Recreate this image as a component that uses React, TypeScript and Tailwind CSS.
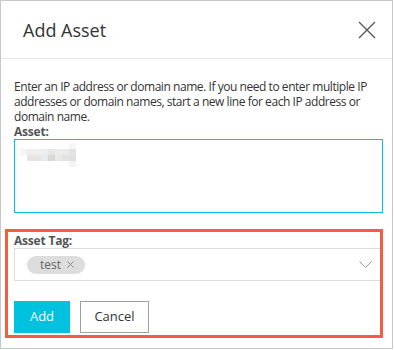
import React from "react";

const mosaic: string[][] = [
  ["#ffffff", "#ffffff", "#ffffff", "#ffffff", "#ffffff", "#ffffff", "#ffffff", "#f7f7f7"],
  ["#f4f4f4", "#ededed", "#efefef", "#ebeef0", "#e6e6e6", "#ececec", "#ebebeb", "#e3e3e3"],
  ["#ffffff", "#e4e4e4", "#e8e6e2", "#e6ebed", "#d8d8d8", "#e9e9e6", "#e2e2e2", "#e1e1e1"],
  ["#ffffff", "#ffffff", "#ffffff", "#ffffff", "#ffffff", "#ffffff", "#ffffff", "#f4f4f4"],
];

export default function App() {
  return (
    <div
      className="relative w-[393px] h-[349px] border border-[#c8c8c8] bg-white text-[#333]"
      style={{ fontFamily: '"Open Sans", "Noto Sans", sans-serif' }}
    >
      <div className="h-[58px] border-b border-[#e5e5e5] flex items-center justify-between pl-[22px] pr-[16px]">
        <span className="text-[18px] leading-none text-[#333]">Add Asset</span>
        <svg width="18" height="18" viewBox="0 0 18 18" fill="none">
          <path d="M1 1L17 17M17 1L1 17" stroke="#555" strokeWidth="1.3" />
        </svg>
      </div>
      <div className="pl-[13px] pr-[9px] pt-[20px]">
        <p className="text-[12px] leading-[15px] text-[#333] tracking-[-0.45px]">
          Enter an IP address or domain name. If you need to enter multiple IP addresses or domain names, start a new
          line for each IP address or domain name.
        </p>
        <div className="text-[12px] leading-[15px] font-bold text-[#555] tracking-[-0.2px]">Asset:</div>
        <div className="h-[74px] border border-[#00c1de] pl-[5px] pt-[3px]">
          <div className="flex flex-col">
            {mosaic.map((row, i) => (
              <div key={i} className="flex">
                {row.map((c, j) => (
                  <div key={j} className="w-[7px] h-[6px]" style={{ backgroundColor: c }} />
                ))}
              </div>
            ))}
          </div>
        </div>
        <div className="mt-[20px] text-[12px] leading-[15px] font-bold text-[#555] tracking-[-0.2px]">Asset Tag:</div>
        <div className="h-[33px] border border-[#dcdcdc] flex items-center justify-between pl-[12px] pr-[10px]">
          <span className="h-[18px] rounded-full bg-[#dddddd] flex items-center pl-[13px] pr-[11px] text-[12px] text-[#666] gap-[6px]">
            <span>test</span>
            <svg width="7" height="7" viewBox="0 0 7 7">
              <path d="M0.5 0.5L6.5 6.5M6.5 0.5L0.5 6.5" stroke="#888" strokeWidth="1" />
            </svg>
          </span>
          <svg width="13" height="7" viewBox="0 0 13 7" fill="none">
            <path d="M0.5 0.5L6.5 6.5L12.5 0.5" stroke="#999" strokeWidth="1" />
          </svg>
        </div>
        <div className="mt-[20px] flex gap-[10px]">
          <button className="w-[56px] h-[32px] bg-[#00c1de] text-white text-[13px]">Add</button>
          <button className="w-[69px] h-[32px] border border-[#a0a0a0] bg-white text-[#333] text-[13px]">
            Cancel
          </button>
        </div>
      </div>
      <div className="absolute left-[4px] top-[228px] w-[378px] h-[109px] border-[3px] border-[#f45d3d] pointer-events-none" />
    </div>
  );
}
